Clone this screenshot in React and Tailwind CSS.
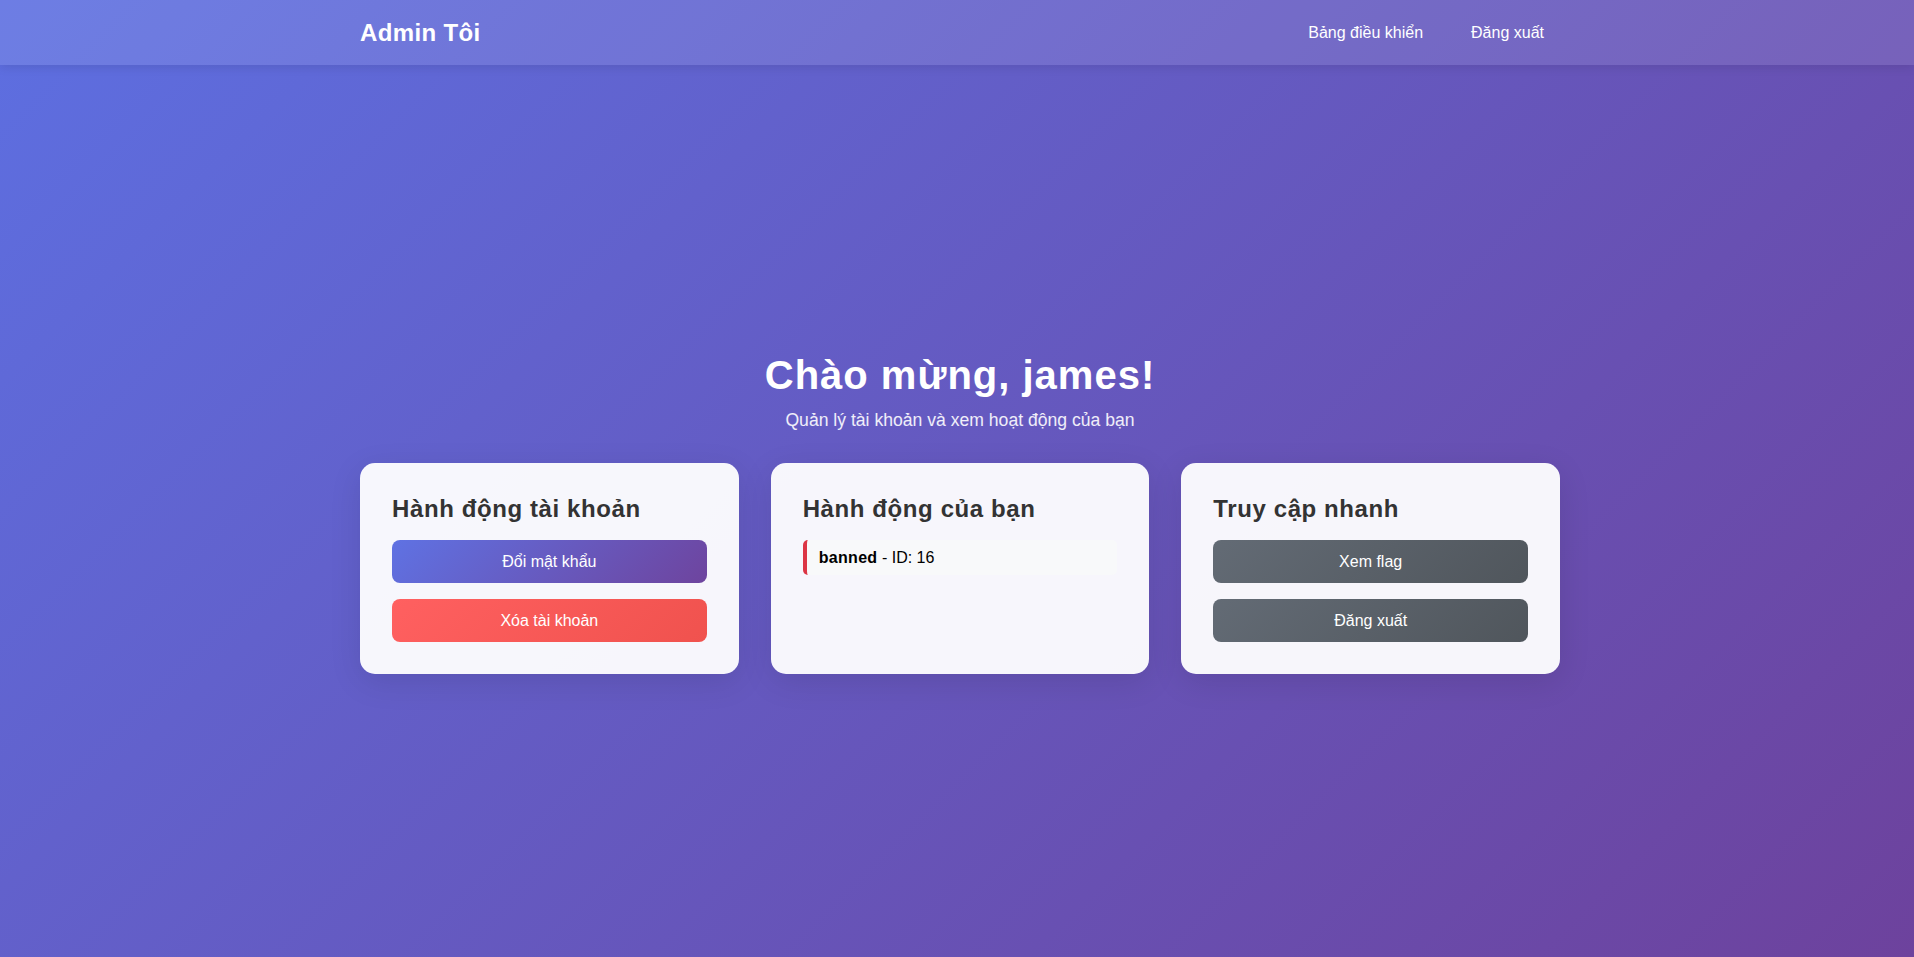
export default function App() {
  const font = { fontFamily: '"Liberation Sans", Arial, sans-serif' };

  return (
    <div
      className="min-h-screen flex flex-col bg-[linear-gradient(135deg,#5d6fe1_0%,#6d429d_100%)] text-white"
      style={font}
    >
      {/* Top bar */}
      <nav className="bg-white/10 shadow-[0_2px_10px_rgba(0,0,0,0.1)] py-4 pl-[6px]">
        <div className="max-w-[1200px] mx-auto flex items-center justify-between">
          <span className="text-2xl font-bold leading-[33px] tracking-[0.015em]">Admin Tôi</span>
          <div className="flex items-center gap-4">
            <a className="px-4 py-2 text-base leading-[17px] rounded-md hover:bg-white/10 cursor-pointer">Bảng điều khiển</a>
            <a className="px-4 py-2 text-base leading-[17px] rounded-md hover:bg-white/10 cursor-pointer">Đăng xuất</a>
          </div>
        </div>
      </nav>

      <main className="flex-1 flex items-center pl-[6px] pt-[3px]">
        <div className="w-full max-w-[1200px] mx-auto">
          <div className="text-center mb-[29px]">
            <h1 className="text-[40px] font-bold leading-[1.2] tracking-[0.025em] mb-[8px]">Chào mừng, james!</h1>
            <p className="text-[17.6px] leading-normal text-white/90">Quản lý tài khoản và xem hoạt động của bạn</p>
          </div>

          <div className="grid grid-cols-3 gap-8">
            <div className="bg-white/95 rounded-[15px] p-8 shadow-[0_8px_32px_rgba(0,0,0,0.1)]">
              <h3 className="text-2xl font-bold leading-[1.2] tracking-[0.025em] text-[#333] mb-4">Hành động tài khoản</h3>
              <button className="w-full py-3 rounded-lg text-base leading-[19px] text-white bg-[linear-gradient(135deg,#5f72e3_0%,#6e449e_100%)] mb-4">
                Đổi mật khẩu
              </button>
              <button className="w-full py-3 rounded-lg text-base leading-[19px] text-white bg-[linear-gradient(135deg,#ff6060_0%,#f0524e_100%)]">
                Xóa tài khoản
              </button>
            </div>

            <div className="bg-white/95 rounded-[15px] p-8 shadow-[0_8px_32px_rgba(0,0,0,0.1)]">
              <h3 className="text-2xl font-bold leading-[1.2] tracking-[0.025em] text-[#333] mb-4">Hành động của bạn</h3>
              <div className="bg-[#f8f9fa] border-l-4 border-[#dc3545] rounded-[5px] px-3 py-2 text-base leading-[19px] text-black">
                <strong className="tracking-[0.02em]">banned</strong> - ID: 16
              </div>
            </div>

            <div className="bg-white/95 rounded-[15px] p-8 shadow-[0_8px_32px_rgba(0,0,0,0.1)]">
              <h3 className="text-2xl font-bold leading-[1.2] tracking-[0.025em] text-[#333] mb-4">Truy cập nhanh</h3>
              <button className="w-full py-3 rounded-lg text-base leading-[19px] text-white bg-[linear-gradient(135deg,#636b75_0%,#50565c_100%)] mb-4">
                Xem flag
              </button>
              <button className="w-full py-3 rounded-lg text-base leading-[19px] text-white bg-[linear-gradient(135deg,#636b75_0%,#50565c_100%)]">
                Đăng xuất
              </button>
            </div>
          </div>
        </div>
      </main>
    </div>
  );
}
